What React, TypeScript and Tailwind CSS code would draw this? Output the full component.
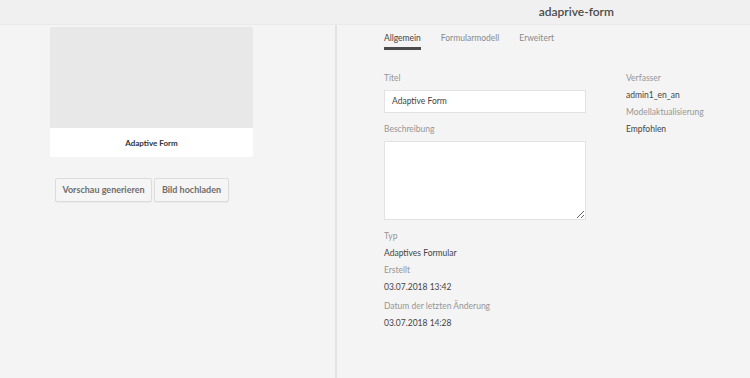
const labelClass = 'leading-[17px] text-[8.5px] text-[#969696]';
const valueClass = 'leading-[17px] text-[8.5px] text-[#444444]';

const tabs = ['Allgemein', 'Formularmodell', 'Erweitert'];

const App = () => {
  return (
    <div className="h-[378px] w-[750px] overflow-hidden bg-[#f4f4f4] font-['Lato',sans-serif]">
      <header className="flex h-[25px] items-center justify-end border-b border-[#eaeaea] bg-[#f0f0f0] pr-[136px]">
        <h1 className="text-[12px] font-semibold text-[#4b4b4b]">adaprive-form</h1>
      </header>

      <div className="flex h-[353px]">
        <aside className="w-[335px] pl-[50px] pt-[2px]">
          <div className="w-[203px] rounded-[2px] bg-white">
            <div className="h-[101px] rounded-t-[2px] bg-[#e8e8e8]" />
            <div className="flex h-[29px] items-center justify-center text-[8px] font-bold text-[#323232]">
              Adaptive Form
            </div>
          </div>
          <div className="mt-[21px] flex gap-[2px] pl-[5px]">
            <button className="h-[24px] w-[97px] rounded-[2px] border border-[#dcdcdc] bg-[#f5f5f5] text-[9px] font-bold text-[#6e6e6e] shadow-[0_1px_1px_rgba(0,0,0,0.04)]">
              Vorschau generieren
            </button>
            <button className="h-[24px] w-[75px] rounded-[2px] border border-[#dcdcdc] bg-[#f5f5f5] text-[9px] font-bold text-[#6e6e6e] shadow-[0_1px_1px_rgba(0,0,0,0.04)]">
              Bild hochladen
            </button>
          </div>
        </aside>

        <main className="flex-1 border-l-2 border-[#e4e4e4] pl-[47px]">
          <nav className="mt-[5px] flex gap-[20px]">
            {tabs.map((tab, index) => (
              <span
                key={tab}
                className={
                  index === 0
                    ? 'border-b-[3px] border-[#4b4b4b] text-[8.5px] leading-[17px] text-[#444444]'
                    : 'border-b-[3px] border-transparent text-[8.5px] leading-[17px] text-[#8a8a8a]'
                }
              >
                {tab}
              </span>
            ))}
          </nav>

          <div className="mt-[20px] flex gap-[40px]">
            <div className="w-[202px]">
              <p className={labelClass}>Titel</p>
              <div className="mt-[3px] flex h-[23px] items-center border border-[#e2e2e2] bg-white px-[7px] text-[8.5px] text-[#444444]">
                Adaptive Form
              </div>
              <p className={`mt-[8px] ${labelClass}`}>Beschreibung</p>
              <textarea className="mt-[3px] block h-[79px] w-[202px] resize-y border border-[#e2e2e2] bg-white" />
              <p className={`mt-[8px] ${labelClass}`}>Typ</p>
              <p className={valueClass}>Adaptives Formular</p>
              <p className={labelClass}>Erstellt</p>
              <p className={valueClass}>03.07.2018 13:42</p>
              <p className={`mt-[2px] ${labelClass}`}>Datum der letzten Änderung</p>
              <p className={valueClass}>03.07.2018 14:28</p>
            </div>

            <div>
              <p className={labelClass}>Verfasser</p>
              <p className={valueClass}>admin1_en_an</p>
              <p className={labelClass}>Modellaktualisierung</p>
              <p className={valueClass}>Empfohlen</p>
            </div>
          </div>
        </main>
      </div>
    </div>
  );
};

export default App;
